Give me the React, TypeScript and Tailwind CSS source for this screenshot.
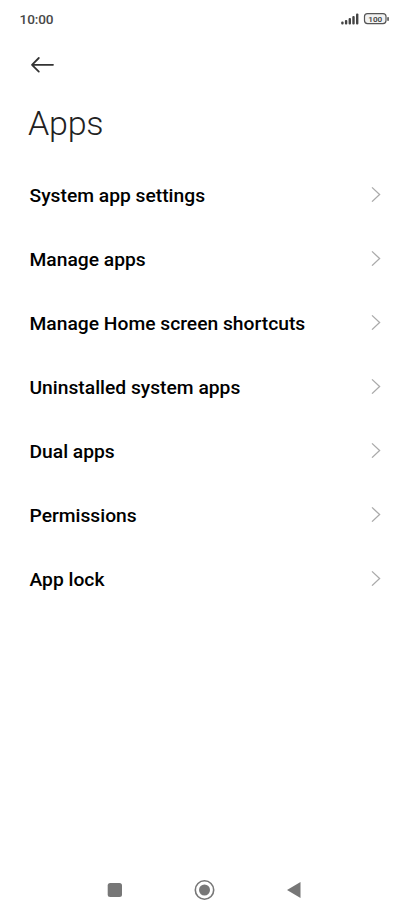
const items = ["System app settings","Manage apps","Manage Home screen shortcuts","Uninstalled system apps","Dual apps","Permissions","App lock"];

export default function App() {
  return (
    <div className="flex h-[914px] w-[411px] flex-col overflow-hidden bg-white font-['Roboto',sans-serif] text-black">
      <header className="flex h-[38px] items-center justify-between pl-[19.5px] pr-[21px]">
        <span className="text-[13.6px] font-medium leading-[20px] tracking-[-0.1px] text-[#484848]">10:00</span>
        <svg width="50" height="14" viewBox="340 12 50 14" fill="#444">
          <rect x="341.2" y="21.6" width="2.4" height="2.9" rx="1" />
          <rect x="344.9" y="20" width="2.4" height="4.5" rx="1" />
          <rect x="348.6" y="18" width="2.4" height="6.5" rx="1" />
          <rect x="352.3" y="16" width="2.4" height="8.5" rx="1" />
          <rect x="356" y="13.5" width="2.4" height="11" rx="1" />
          <rect x="364.5" y="13.6" width="21.5" height="10" rx="3" fill="#f2f2f2" stroke="#555" strokeWidth="1.2" />
          <text x="375.3" y="21.6" fontSize="8" fontWeight="600" textAnchor="middle" textLength="14" lengthAdjust="spacingAndGlyphs">100</text>
          <rect x="387.3" y="17" width="1.5" height="4" rx="0.7" />
        </svg>
      </header>
      <div className="flex h-[54px] items-center pl-[30px]">
        <svg width="24" height="18" viewBox="0 0 24 18" fill="none" stroke="#333" strokeWidth="1.8" strokeLinecap="round" strokeLinejoin="round"><path d="M23 8.8H2M8.8 2L2 8.8L8.8 15.6" /></svg>
      </div>
      <h1 className="h-[71px] pl-7 pt-[10px] text-[34px] font-light leading-[42px] tracking-[-0.2px] text-[#222]">Apps</h1>
      <ul>
        {items.map((t) => (
          <li key={t} className="flex h-16 items-center justify-between pl-[29.5px] pr-[30px]">
            <span className="pt-[3px] text-[19.25px] font-medium">{t}</span>
            <svg className="mb-[2px]" width="10" height="16" viewBox="0 0 10 16" fill="none" stroke="#aaa" strokeWidth="1.3"><path d="M1 1.4L8.6 8.5L1 15.6" /></svg>
          </li>
        ))}
      </ul>
      <nav className="mt-auto flex h-12 items-center pl-[107px]">
        <svg width="195" height="22" viewBox="107 879 195 22" fill="#777">
          <rect x="107.7" y="883" width="14.3" height="14" rx="2.5" />
          <circle cx="204.5" cy="890" r="9.2" fill="none" stroke="#777" strokeWidth="1.6" />
          <circle cx="204.5" cy="890" r="5.5" />
          <path d="M287 890L300.5 882V898Z" />
        </svg>
      </nav>
    </div>
  );
}
